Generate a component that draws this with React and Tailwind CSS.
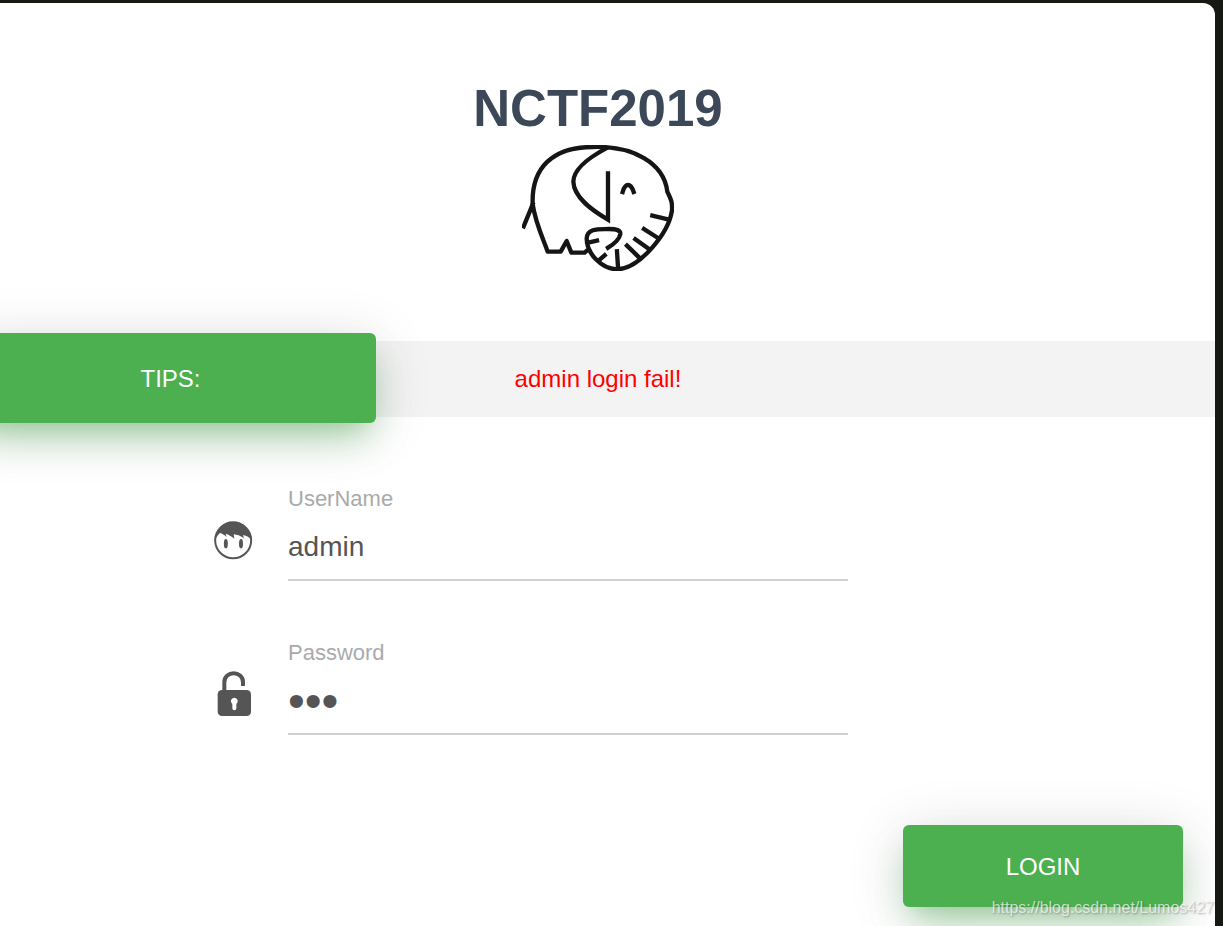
import React, { useState } from "react";

const RAISED =
  "rounded-md bg-[#4caf50] pt-0.5 text-2xl text-white shadow-[0_20px_42px_-10px_rgba(76,175,80,0.4),0_8px_58px_0_rgba(0,0,0,0.14),0_16px_20px_-10px_rgba(76,175,80,0.2)]";

function Elephant() {
  return (
    <svg
      viewBox="66 30 456 378"
      className="mt-1.5 h-[126px] w-[152px]"
      fill="none"
      stroke="#151515"
      strokeWidth="13"
      strokeLinecap="square"
      role="img"
      aria-label="Elephant"
    >
      <path d="M71 274 L98 208" />
      <path
        d="M266 342 L254 353 L214 353 L200 318 L182 350 L143 350 C128 308 106 262 98 208 C94 98 158 36 278 36 C400 32 492 84 502 170 C515 196 517 204 516 226 C506 296 416 403 350 403 C306 401 260 358 260 310 C262 278 300 283 326 282 C350 282 362 286 361 297 C358 315 342 327 324 338"
        strokeLinejoin="round"
      />
      <path d="M318 40 C262 70 220 102 220 140 C222 188 276 226 324 254 V115" />
      <path d="M368 171 Q374 150 384 150 Q394 150 401 171" />
      <path d="M457 242 L504 253 M432 282 L474 309 M406 313 L447 342 M381 332 L417 367 M351 349 L354 398 M314 361 L299 374 M268 322 L291 317" />
    </svg>
  );
}

function UserIcon() {
  return (
    <svg viewBox="36 18 132 144" className="mt-8 h-12 w-11 shrink-0" aria-hidden="true">
      <circle cx="99.500" cy="91" r="54" fill="none" stroke="#555" strokeWidth="6" />
      <path
        d="M45 93 C47 84 53 76 60 69 C67 71 73 75 80 81 L77 71 C86 74 94 78 103 86 L101 73 C111 74 120 77 132 85 L129 75 C140 78 149 81 154 91 C153 56 128 36 99 36 C69 36 45 59 45 93Z"
        fill="#555"
      />
      <ellipse cx="77.500" cy="101" rx="6" ry="14" fill="#555" />
      <ellipse cx="123" cy="101" rx="6" ry="14" fill="#555" />
    </svg>
  );
}

function LockIcon() {
  return (
    <svg viewBox="36 30 132 144" className="mt-8 h-12 w-11 shrink-0" aria-hidden="true">
      <path d="M73 94 V67 C73 31 129 31 129 67 V78" fill="none" stroke="#555" strokeWidth="12" />
      <rect x="53" y="90" width="100" height="78" rx="13" fill="#555" />
      <path d="M103 113 a10.500 10.500 0 0 1 6 19 V145 a6 6 0 0 1 -12 0 V132 a10.500 10.500 0 0 1 6 -19Z" fill="#fff" />
    </svg>
  );
}

function Field({ id, label, type, initial, icon }) {
  const [value, setValue] = useState(initial);
  return (
    <div className="flex items-start gap-8">
      {icon}
      <div className="flex w-[560px] flex-col">
        <label htmlFor={id} className="text-[22px] leading-[30px] text-[#aaa]">
          {label}
        </label>
        <input
          id={id}
          type={type}
          value={value}
          onChange={(e) => setValue(e.target.value)}
          className={`h-[67px] w-full border-b-2 border-[#d0d0d0] bg-transparent text-[#555] outline-none ${
            type === "password" ? "text-5xl" : "text-[28px]"
          }`}
        />
      </div>
    </div>
  );
}

export default function App() {
  return (
    <div className="relative flex min-h-screen flex-col overflow-hidden bg-[#161813] pt-[3px] pr-2 font-['Liberation_Sans',Arial,sans-serif]">
      <main className="-ml-[19px] flex flex-1 flex-col overflow-hidden rounded-tr-xl bg-white pt-[76px]">
        <header className="flex flex-col items-center">
          <h1 className="text-[51px] leading-[60px] font-bold text-[#3c4858]">NCTF2019</h1>
          <Elephant />
        </header>

        <section className="mt-[70px] grid h-[76px] grid-cols-1 items-center bg-[#f3f3f3]">
          <button
            type="button"
            className={`${RAISED} -mt-2 -mb-1.5 -ml-4 h-[90px] w-[411px] self-start justify-self-start [grid-area:1/1]`}
          >
            TIPS:
          </button>
          <p className="justify-self-center text-2xl text-[#f00] [grid-area:1/1]">admin login fail!</p>
        </section>

        <form className="mt-[67px] flex flex-col" onSubmit={(e) => e.preventDefault()}>
          <div className="flex flex-col gap-[57px] pl-[231px]">
            <Field id="username" label="UserName" type="text" initial="admin" icon={<UserIcon />} />
            <Field id="password" label="Password" type="password" initial="123" icon={<LockIcon />} />
          </div>
          <button type="submit" className={`${RAISED} mt-[90px] mr-8 h-[82px] w-[280px] self-end`}>
            LOGIN
          </button>
        </form>
      </main>
      <span className="absolute right-[9px] bottom-1.5 text-base text-white/70 [text-shadow:1px_1px_2px_rgba(0,0,0,0.3)]">
        https://blog.csdn.net/Lumos427
      </span>
    </div>
  );
}
